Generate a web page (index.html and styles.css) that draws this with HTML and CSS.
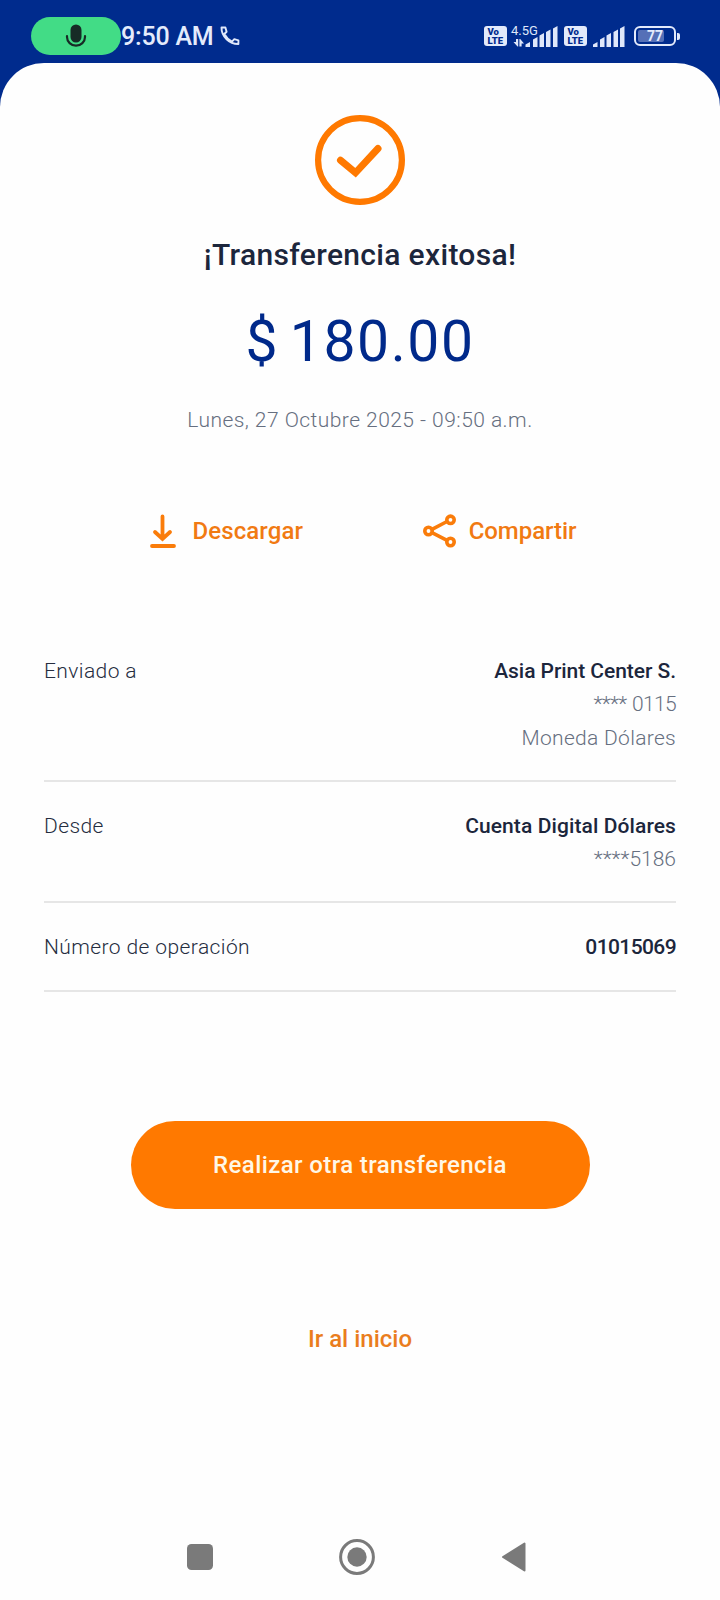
FILE: index.html
```html
<!DOCTYPE html>
<html lang="es">
<head>
<meta charset="utf-8">
<meta name="viewport" content="width=720">
<title>Transferencia exitosa</title>
<link rel="stylesheet" href="styles.css">
</head>
<body>
<div class="screen">
  <header class="status">
    <div class="status-left">
      <span class="mic-pill">
        <svg width="22" height="24" viewBox="0 0 22 24"><rect x="5.5" y="0.5" width="11" height="18" rx="5.5" fill="#172b26"/><path d="M2 12v1a9 8.6 0 0 0 18 0v-1" fill="none" stroke="#172b26" stroke-width="2.2" stroke-linecap="round"/></svg>
      </span>
      <span class="clock">9:50 AM</span>
      <svg class="phone" width="20" height="20" viewBox="0 0 20 20" fill="none" stroke="#e0e8fb" stroke-width="1.9" stroke-linejoin="round"><path d="M1.5 1.5H5.4L6.6 5.8L4.3 8C6 11.3 8.5 13.8 12 15.6L14.3 13.2L18.4 14.3V18C9.5 18.2 1.4 10.5 1.5 1.5Z"/></svg>
    </div>
    <div class="status-right">
      <span class="volte"><span>Vo</span><span>LTE</span></span>
      <span class="network">
        <svg width="48" height="22" viewBox="0 0 48 22" fill="#dfe7fa"><path d="M0.500 16H3V13H5.200V20.500H4.500zM6.400 13H7.200L11 17.500H8.600V20.500H6.400z"/><path d="M12.500 18.500l4.500-2.500v5h-4.500zM20 13.500l4.500-2.500v10h-4.500zM26.500 9.500l4.500-2.500v14h-4.500zM33 6l4.500-2.500v17.500h-4.500zM40 2.500l4.500-2.500v21h-4.500z"/></svg>
        <span class="network-label">4.5G</span>
      </span>
      <span class="volte volte-second"><span>Vo</span><span>LTE</span></span>
      <svg class="bars" width="32" height="22" viewBox="0 0 32 22" fill="#dfe7fa"><path d="M0 18.500l4.500-2.500v5h-4.500zM7 13.500l4.500-2.500v10h-4.500zM13.500 9.500l4.500-2.500v14h-4.500zM20.500 6l4.500-2.500v17.500h-4.500zM27 2.500l4.500-2.500v21h-4.500z"/></svg>
      <span class="battery"><span class="battery-body"><span class="battery-level"></span><span class="battery-text">77</span></span><span class="battery-tip"></span></span>
    </div>
  </header>

  <main class="sheet">
    <svg class="check" width="90" height="90" viewBox="0 0 90 90" fill="none" stroke="#ff7900" stroke-width="6.200"><circle cx="45" cy="45" r="41.900"/><path d="M25.500 45.300L40.500 57.800L63 33.500" stroke-width="7" stroke-linecap="round"/></svg>
    <h1 class="title">¡Transferencia exitosa!</h1>
    <p class="amount">$ 180.00</p>
    <p class="date">Lunes, 27 Octubre 2025 - 09:50 a.m.</p>

    <div class="actions">
      <a class="action">
        <svg width="26" height="34" viewBox="0 0 26 34" fill="none" stroke="#fa7c0a" stroke-width="3.800" stroke-linecap="round"><path d="M12.500 2.500V24M5 18L12.500 25L20 18M2 32H24"/></svg>
        <span class="download-text">Descargar</span>
      </a>
      <a class="action">
        <svg width="34" height="34" viewBox="0 0 34 34" fill="none" stroke="#fa7c0a" stroke-width="3.600"><circle cx="5.500" cy="17" r="3.700"/><circle cx="27.500" cy="5.800" r="3.700"/><circle cx="27.500" cy="28" r="3.700"/><path d="M9 15.300L24 7.500M9 18.700L24 26.300"/></svg>
        <span class="share-text">Compartir</span>
      </a>
    </div>

    <dl class="details">
      <div class="row">
        <dt class="label">Enviado a</dt>
        <dd class="values"><strong class="name-to">Asia Print Center S.</strong><span class="acct-to">**** 0115</span><span class="currency">Moneda Dólares</span></dd>
      </div>
      <div class="row">
        <dt class="label">Desde</dt>
        <dd class="values"><strong class="name-from">Cuenta Digital Dólares</strong><span>****5186</span></dd>
      </div>
      <div class="row">
        <dt class="label">Número de operación</dt>
        <dd class="values"><strong class="op-number">01015069</strong></dd>
      </div>
    </dl>

    <button class="primary">Realizar otra transferencia</button>
    <a class="home">Ir al inicio</a>
  </main>

  <nav class="nav">
    <svg width="26" height="26" viewBox="0 0 26 26"><rect width="26" height="26" rx="4.500" fill="#7a7a7a"/></svg>
    <svg width="36" height="36" viewBox="0 0 36 36"><circle cx="18" cy="18" r="16.400" fill="none" stroke="#7a7a7a" stroke-width="3"/><circle cx="18" cy="18" r="9.700" fill="#7a7a7a"/></svg>
    <svg width="25" height="32" viewBox="0 0 25 32"><path d="M2 16L23.500 2.500V29.500Z" fill="#7a7a7a" stroke="#7a7a7a" stroke-width="2" stroke-linejoin="round"/></svg>
  </nav>
</div>
</body>
</html>
```
FILE: styles.css
```css
* { box-sizing: border-box; margin: 0; padding: 0; }
body { font-family: Roboto, "Liberation Sans", sans-serif; background: #002b8d; color: #1c263c; }
svg { display: block; flex: none; }
.screen { width: 720px; height: 1600px; display: flex; flex-direction: column; overflow: hidden; }
.status { height: 62.5px; flex: none; display: flex; justify-content: space-between; padding: 17px 40px 0 31px; color: #e4ebfc; }
.status-left, .status-right { display: flex; align-items: flex-start; }
.mic-pill { width: 90px; height: 38px; border-radius: 19px; background: #42dc86; display: flex; justify-content: center; padding-top: 7px; }
.clock { padding-top: 1px; font-size: 25px; font-weight: 500; line-height: 38px; letter-spacing: -0.2px; white-space: nowrap; }
.phone { margin: 9px 0 0 7px; }
.status-right { padding-top: 9px; }
.volte { width: 23px; height: 20px; border-radius: 3px; background: #e3eafb; color: #002b8d; display: flex; flex-direction: column; font-size: 9.5px; font-weight: 900; line-height: 8.500px; padding: 2px 0 0 3.500px; }
.network { position: relative; width: 48px; height: 22px; margin-left: 6px; }
.network-label { position: absolute; left: -2px; top: -3.500px; font-size: 13px; line-height: 16px; color: #dfe7fa; }
.volte-second { margin-left: 3px; }
.bars { margin-left: 6px; }
.battery { display: flex; align-items: center; margin-left: 9px; height: 20px; }
.battery-body { position: relative; width: 42px; height: 20px; border: 2px solid #e3eafb; border-radius: 6px; display: flex; align-items: center; justify-content: center; }
.battery-level { position: absolute; left: 2px; top: 2px; width: 26px; height: 12px; background: #5570b7; border-radius: 2px; }
.battery-text { position: relative; font-size: 14px; font-weight: 700; line-height: 16px; }
.battery-tip { width: 3px; height: 7px; margin-left: 1px; border-radius: 0 2px 2px 0; background: #e3eafb; }

.sheet { flex: 1; background: #fefefe; border-radius: 44px 44px 0 0; display: flex; flex-direction: column; align-items: center; padding-top: 52px; }
.title { margin-top: 30px; font-size: 30px; line-height: 40px; font-weight: 500; letter-spacing: 0.33px; white-space: nowrap; }
.amount { margin-top: 32px; font-size: 57px; line-height: 70px; font-weight: 400; letter-spacing: 1.6px; word-spacing: -5px; color: #00298a; white-space: nowrap; }
.date { margin-top: 28px; font-size: 21px; line-height: 30px; font-weight: 300; letter-spacing: 0.45px; color: #666f80; white-space: nowrap; }
.actions { width: 427px; margin: 79.500px 0 0 6px; display: flex; justify-content: space-between; }
.action { display: flex; align-items: center; gap: 17px; color: #f17a12; font-size: 24px; line-height: 34px; font-weight: 500; }
.action + .action { gap: 12px; }
.download-text { letter-spacing: 0.1px; }
.share-text { letter-spacing: -0.05px; }

.details { width: 632px; margin-top: 89px; }
.row { display: flex; justify-content: space-between; font-size: 21px; line-height: 33.300px; border-bottom: 2px solid #e6e6e6; padding: 28px 0 25px; }
.row:first-child { padding-top: 18px; }
.label { font-weight: 300; letter-spacing: 0.4px; color: #252d3f; }
.values { display: flex; flex-direction: column; align-items: flex-end; color: #666f80; font-weight: 300; }
.values strong { color: #1c263c; font-weight: 500; }
.values .name-to { letter-spacing: -0.05px; }
.values .name-from { letter-spacing: 0.1px; }
.acct-to { letter-spacing: -0.65px; word-spacing: 1px; }
.currency { letter-spacing: 0.3px; }
.values .op-number { letter-spacing: -0.6px; }

.primary { width: 459px; height: 88px; margin-top: 129.500px; border: 0; border-radius: 44px; background: #ff7900; color: #fff7e6; font: 500 24px/88px Roboto, sans-serif; letter-spacing: 0.4px; white-space: nowrap; flex: none; }
.home { margin-top: 114px; color: #ea7d1d; font-size: 24px; line-height: 32px; font-weight: 500; }
.nav { height: 88px; flex: none; background: #fefefe; display: flex; justify-content: space-between; align-items: center; padding: 1px 194px 0 187px; }
```
